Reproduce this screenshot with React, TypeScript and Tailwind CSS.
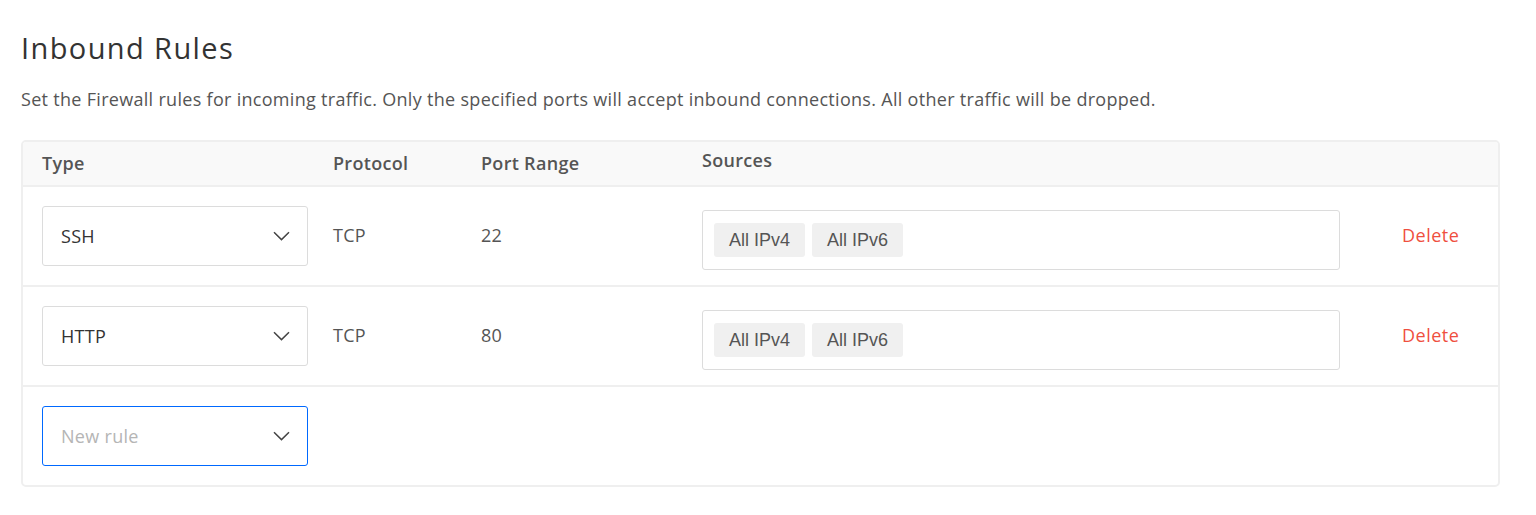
const rules = [
  { type: "SSH", protocol: "TCP", port: "22" },
  { type: "HTTP", protocol: "TCP", port: "80" },
];

const Chevron = () => (
  <svg width="17" height="10" viewBox="0 0 17 10" fill="none" className="text-[#444]">
    <path d="M1 1.3 L8.5 8.6 L16 1.3" stroke="currentColor" strokeWidth="1.5" />
  </svg>
);

const Select = ({ label, placeholder }: { label: string; placeholder?: boolean }) => {
  return (
    <div
      className={`w-[266px] h-[60px] rounded-[3px] flex items-center justify-between pl-[18px] pr-[17px] border ${
        placeholder ? "border-[#0069ff]" : "border-[#dcdcdc]"
      }`}
    >
      <span className={`text-[18px] ${placeholder ? "text-[#b5b5b5]" : "text-[#333]"}`}>{label}</span>
      <Chevron />
    </div>
  );
};

const Chip = ({ text }: { text: string }) => (
  <div className="h-[34px] px-[15px] flex items-center bg-[#f0f0f0] rounded-[3px] text-[18px] tracking-normal text-[#555] font-['Liberation_Sans',Arial,sans-serif]">
    {text}
  </div>
);

export default function App() {
  return (
    <div className="bg-white min-h-[515px] px-[21px] pt-[28px] font-['Open_Sans',sans-serif] tracking-[0.3px]">
      <h1 className="text-[29px] leading-[40px] tracking-[1.4px] text-[#333] font-normal">Inbound Rules</h1>
      <p className="mt-[19px] text-[18px] leading-[24px] text-[#555]">
        Set the Firewall rules for incoming traffic. Only the specified ports will accept inbound connections. All other traffic will be dropped.
      </p>

      {/* Rules table */}
      <div className="mt-[29px] w-[1479px] border-2 border-[#efefef] rounded-[5px] overflow-hidden">
        <div className="h-[45px] bg-[#f9f9f9] border-b-2 border-[#efefef] flex items-center pl-[19px] text-[18px] font-semibold text-[#555]">
          <div className="w-[291px] pb-[1px]">Type</div>
          <div className="w-[148px] pb-[1px]">Protocol</div>
          <div className="w-[221px] pb-[1px]">Port Range</div>
          <div className="pb-[7px]">Sources</div>
        </div>

        {rules.map((r) => (
          <div key={r.type} className="h-[100px] border-b-2 border-[#efefef] flex items-center pl-[19px] text-[18px] text-[#555]">
            <div className="w-[291px]">
              <Select label={r.type} />
            </div>
            <div className="w-[148px] pb-[2px]">{r.protocol}</div>
            <div className="w-[221px] pb-[2px]">{r.port}</div>
            <div className="w-[638px] h-[60px] mt-[8px] border border-[#dcdcdc] rounded-[3px] flex items-center gap-[7px] px-[11px]">
              <Chip text="All IPv4" />
              <Chip text="All IPv6" />
            </div>
            <div className="ml-[62px] pb-[2px] tracking-[0.5px] text-[#ef4f3f]">Delete</div>
          </div>
        ))}

        <div className="h-[98px] flex items-center pl-[19px]">
          <Select label="New rule" placeholder />
        </div>
      </div>
    </div>
  );
}
